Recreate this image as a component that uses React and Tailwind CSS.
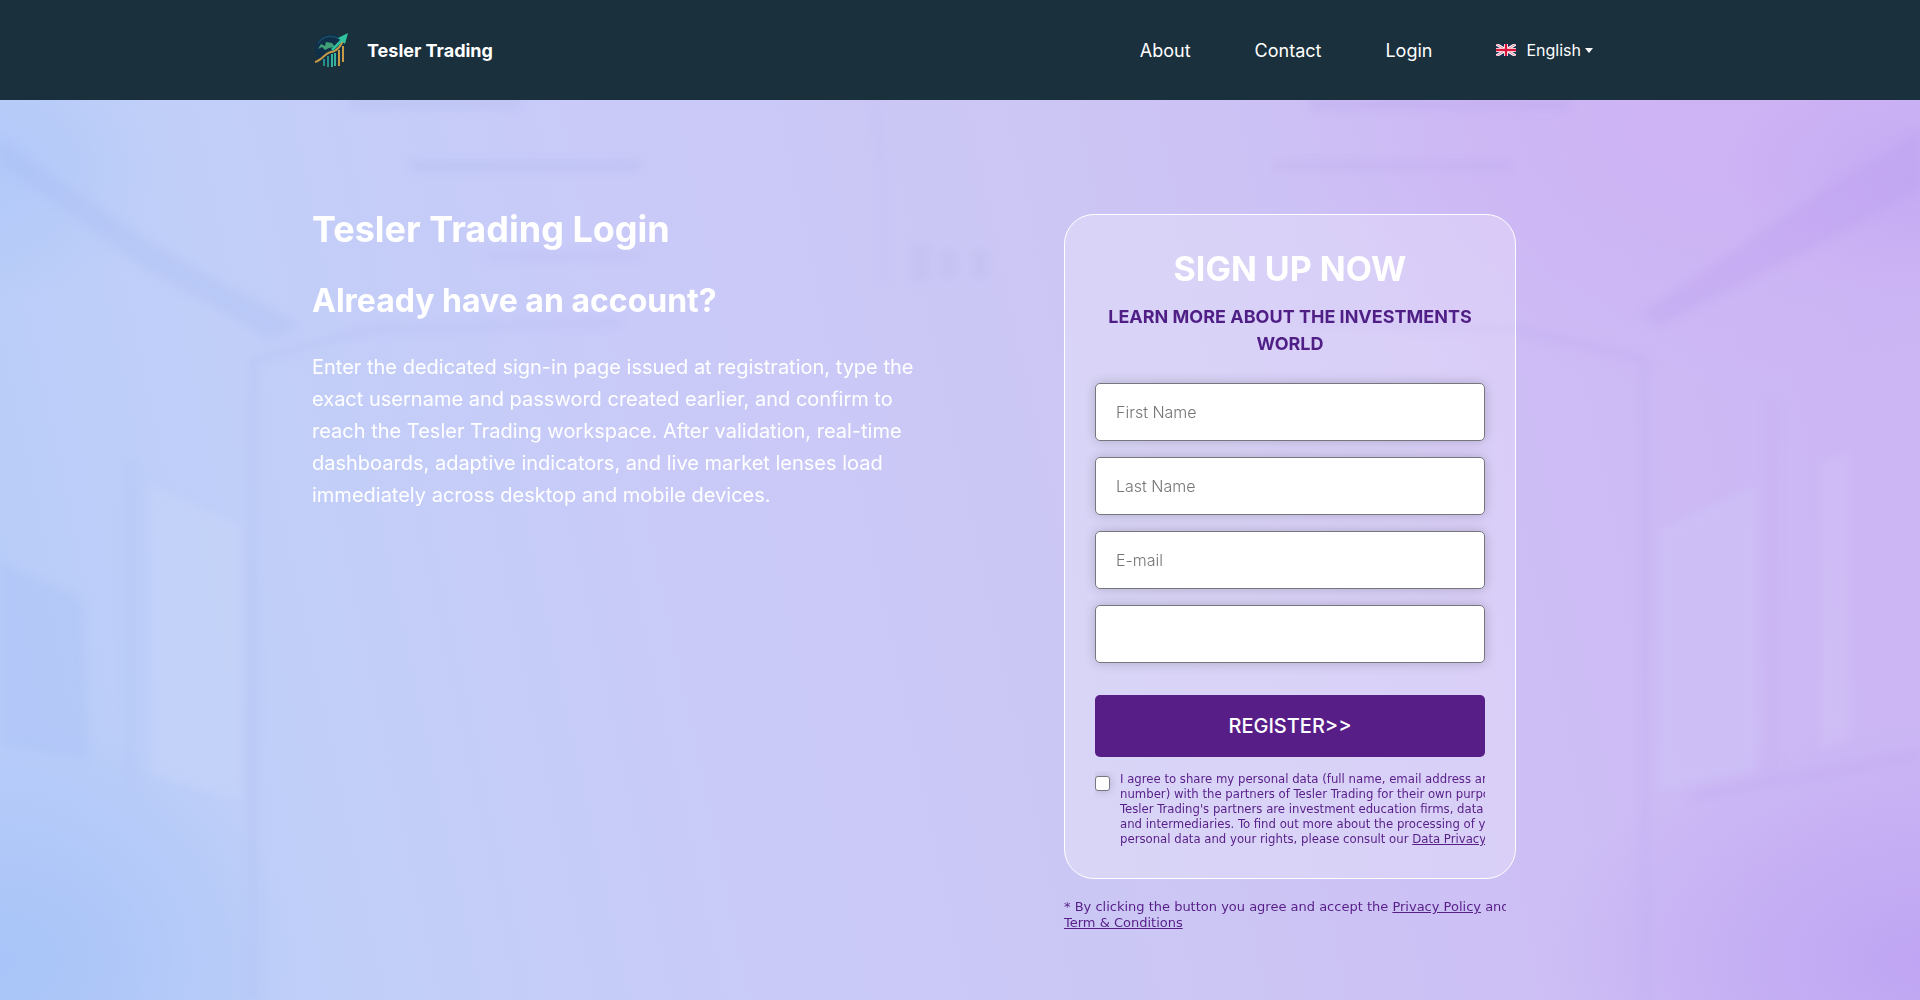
import React from "react";

const navLinks = ["About", "Contact", "Login"];

const fields = [
  { id: "first-name", label: "First Name", type: "text", placeholder: "First Name" },
  { id: "last-name", label: "Last Name", type: "text", placeholder: "Last Name" },
  { id: "email", label: "E-mail", type: "email", placeholder: "E-mail" },
  { id: "phone", label: "Phone", type: "tel", placeholder: "" },
];

function Logo() {
  return (
    <svg viewBox="0 0 40 40" className="h-10 w-10" aria-hidden="true">
      <circle cx="18" cy="18" r="15" fill="#10304a" />
      <path d="M6 12Q15 1 28 8" fill="none" stroke="#1a4d66" strokeWidth="1.5" />
      <g strokeWidth="2">
        <path d="M12 35V28M16 36V25" stroke="#2b8f86" />
        <path d="M20 36V23M23 35V22" stroke="#35b39b" />
        <path d="M27 35V19M31 31V15" stroke="#c79a45" />
      </g>
      <path d="M3 31C10 29 13 22 19 21C26 20 29 14 32 8" fill="none" stroke="#c79a45" strokeWidth="2" />
      <path d="M6 18L9 13L13 15L14 11L20 12L23 16L17 17L13 19L10 16Z" fill="#3f9f77" />
      <path d="M20 19L31 8" stroke="#2fc3a0" strokeWidth="2.5" />
      <path d="M26 7L36 2L33 13Z" fill="#2fc3a0" />
    </svg>
  );
}

function Flag() {
  return (
    <svg viewBox="0 0 20 12" className="h-3 w-5" aria-hidden="true">
      <rect width="20" height="12" fill="#1b2f55" />
      <path d="M0 0L20 12M20 0L0 12" stroke="#fff" strokeWidth="3" />
      <path d="M0 0L20 12M20 0L0 12" stroke="#d8143a" strokeWidth="0.6" />
      <path d="M10 0V12M0 6H20" stroke="#fff" strokeWidth="4" />
      <path d="M10 0V12M0 6H20" stroke="#d8143a" strokeWidth="2.4" />
    </svg>
  );
}

function Header() {
  return (
    <header className="bg-[#1a303c] text-white">
      <div className="mx-auto flex h-[100px] max-w-[1320px] items-center justify-between pt-0.5 pr-[27px] pl-3">
        <a href="#" className="flex items-center gap-[15px] text-lg font-bold">
          <Logo />
          Tesler Trading
        </a>
        <nav className="flex items-center gap-16 text-lg">
          {navLinks.map((link) => (
            <a key={link} href="#">
              {link}
            </a>
          ))}
          <button type="button" className="flex items-center pb-0.5 text-base">
            <Flag />
            <span className="ml-2.5">English</span>
            <span className="ml-1 border-x-4 border-t-5 border-x-transparent border-t-white" />
          </button>
        </nav>
      </div>
    </header>
  );
}

function Backdrop() {
  return (
    <svg
      viewBox="0 0 1920 900"
      preserveAspectRatio="none"
      className="absolute inset-0 h-full w-full"
      aria-hidden="true"
    >
      <defs>
        <linearGradient id="base" x1="0" y1="0.55" x2="1" y2="0.45">
          <stop offset="0" stopColor="#b9cdf9" />
          <stop offset="0.15" stopColor="#c1cff8" />
          <stop offset="0.35" stopColor="#c9caf8" />
          <stop offset="0.6" stopColor="#ccc6f4" />
          <stop offset="0.82" stopColor="#cdbcf5" />
          <stop offset="1" stopColor="#ccb6f4" />
        </linearGradient>
        <radialGradient id="pink">
          <stop offset="0" stopColor="#ceb0f4" stopOpacity="0.7" />
          <stop offset="1" stopColor="#ceb0f4" stopOpacity="0" />
        </radialGradient>
        <radialGradient id="blue">
          <stop offset="0" stopColor="#a8c4f8" />
          <stop offset="1" stopColor="#a8c4f8" stopOpacity="0" />
        </radialGradient>
        <radialGradient id="violet">
          <stop offset="0" stopColor="#bda2f3" />
          <stop offset="1" stopColor="#bda2f3" stopOpacity="0" />
        </radialGradient>
        <filter id="soft">
          <feGaussianBlur stdDeviation="4" />
        </filter>
      </defs>
      <rect width="1920" height="900" fill="url(#base)" />
      <ellipse cx="1700" cy="30" rx="420" ry="260" fill="url(#pink)" />
      <ellipse cx="0" cy="860" rx="300" ry="240" fill="url(#blue)" />
      <ellipse cx="0" cy="70" rx="160" ry="130" fill="url(#blue)" opacity="0.5" />
      <ellipse cx="1920" cy="80" rx="200" ry="130" fill="url(#violet)" opacity="0.5" />
      <ellipse cx="1920" cy="860" rx="380" ry="240" fill="url(#violet)" opacity="0.85" />
      <g filter="url(#soft)">
        {/* ceiling lights and beams */}
        <path d="M412 62H640V69H412Z" fill="#a9b4ec" opacity="0.4" />
        <path d="M1275 62H1510V69H1275Z" fill="#b49fea" opacity="0.25" />
        <path d="M1310 0H1570V10H1310Z" fill="#b49fea" opacity="0.3" />
        <path d="M350 0H520V8H350Z" fill="#a9b4ec" opacity="0.3" />
        <path d="M485 153H640V159H485Z" fill="#b3b5f0" opacity="0.25" />
        <path d="M0 40L150 142L300 225L270 240L140 165L0 62Z" fill="#a3b6f3" opacity="0.25" />
        <path d="M1920 30L1770 125L1640 215L1660 225L1780 165L1920 90Z" fill="#b898f0" opacity="0.25" />
        <path d="M253 260L367 230L620 222" fill="none" stroke="#b0b6f0" strokeWidth="6" opacity="0.25" />
        <path d="M1647 260L1520 230L1300 222" fill="none" stroke="#b79fee" strokeWidth="6" opacity="0.25" />
        <path d="M876 0L884 80V180" fill="none" stroke="#bcb5ee" strokeWidth="4" opacity="0.3" />
        <path d="M912 145H930V182H912ZM940 150H958V178H940ZM972 150H988V178H972Z" fill="#b9b2e8" opacity="0.25" />
        {/* left wall */}
        <path d="M253 260V900" stroke="#b0bcf2" strokeWidth="8" opacity="0.3" />
        <path d="M130 360V690" stroke="#b3c2f4" strokeWidth="6" opacity="0.35" />
        <path d="M150 385L240 425V700L150 675Z" fill="#cdd9fa" opacity="0.35" />
        <path d="M0 462L82 500L88 660L0 645Z" fill="#a4bdf5" opacity="0.3" />
        {/* right wall */}
        <path d="M1645 260V900" stroke="#bda8ee" strokeWidth="8" opacity="0.3" />
        <path d="M1772 300V680" stroke="#c3a8ee" strokeWidth="12" opacity="0.2" />
        <path d="M1660 430L1756 385V670L1660 690Z" fill="#cfc8f9" opacity="0.35" />
        <path d="M1820 365L1850 350V640L1820 650Z" fill="#d3c8f9" opacity="0.3" />
        <path d="M1690 697L1920 655" stroke="#b698ea" strokeWidth="5" opacity="0.25" />
      </g>
    </svg>
  );
}

function SignUpForm() {
  return (
    <form className="rounded-[30px] border border-white bg-white/25 px-[30px] pt-8 pb-8">
      <h2 className="text-center text-[34px] leading-[44px] font-bold text-white">SIGN UP NOW</h2>
      <p className="mt-3 text-center text-lg leading-[27px] font-bold text-[#4f1f86]">
        LEARN MORE ABOUT THE INVESTMENTS WORLD
      </p>
      <div className="mt-[26px] flex flex-col gap-4">
        {fields.map((field) => (
          <input
            key={field.id}
            id={field.id}
            type={field.type}
            aria-label={field.label}
            placeholder={field.placeholder}
            className="h-[58px] w-full rounded-[5px] border border-[#76767f] bg-white px-5 text-base font-light text-black shadow-[0_0_12px_rgba(0,0,0,0.2)] placeholder:text-[#757575]"
          />
        ))}
      </div>
      <button
        type="submit"
        className="mt-8 h-[62px] w-full rounded-[5px] bg-[#571e88] text-xl font-medium text-white"
      >
        REGISTER&gt;&gt;
      </button>
      <div className="mt-3.5 flex items-start gap-2.5 overflow-hidden font-['DejaVu_Sans_Condensed','DejaVu_Sans',sans-serif] text-[13px] leading-[15px] text-[#571e88]">
        <input
          id="agree"
          type="checkbox"
          className="mt-[5px] h-[15px] w-[15px] shrink-0 appearance-none rounded-[3px] border border-[#76767f] bg-white shadow-[0_0_8px_rgba(0,0,0,0.2)]"
        />
        <label htmlFor="agree" className="whitespace-nowrap">
          I agree to share my personal data (full name, email address and
          <br />
          number) with the partners of Tesler Trading for their own purposes.
          <br />
          Tesler Trading's partners are investment education firms, data brokers,
          <br />
          and intermediaries. To find out more about the processing of your
          <br />
          personal data and your rights, please consult our{" "}
          <a href="#" className="underline">
            Data Privacy Notice
          </a>
        </label>
      </div>
    </form>
  );
}

export default function App() {
  return (
    <div className="flex min-h-screen flex-col font-[Inter,sans-serif]">
      <Header />
      <main className="relative flex-1">
        <Backdrop />
        <div className="relative mx-auto flex max-w-[1320px] items-start justify-between pt-[114px] pr-[104px] pb-16 pl-3 text-white">
          <section className="max-w-[620px]">
            <h1 className="text-4xl leading-[30px] font-bold">Tesler Trading Login</h1>
            <h2 className="mt-[25px] text-[32px] leading-[64px] font-bold">
              Already have an account?
            </h2>
            <p className="mt-[18px] text-xl leading-8">
              Enter the dedicated sign-in page issued at registration, type the exact username and
              password created earlier, and confirm to reach the Tesler Trading workspace. After
              validation, real-time dashboards, adaptive indicators, and live market lenses load
              immediately across desktop and mobile devices.
            </p>
          </section>
          <section className="w-[452px]">
            <SignUpForm />
            <p className="mt-5 mr-2.5 overflow-hidden font-['DejaVu_Sans',sans-serif] text-[13px] leading-4 whitespace-nowrap text-[#571e88]">
              * By clicking the button you agree and accept the{" "}
              <a href="#" className="underline">
                Privacy Policy
              </a>{" "}
              and
              <br />
              <a href="#" className="underline">
                Term &amp; Conditions
              </a>
            </p>
          </section>
        </div>
      </main>
    </div>
  );
}
